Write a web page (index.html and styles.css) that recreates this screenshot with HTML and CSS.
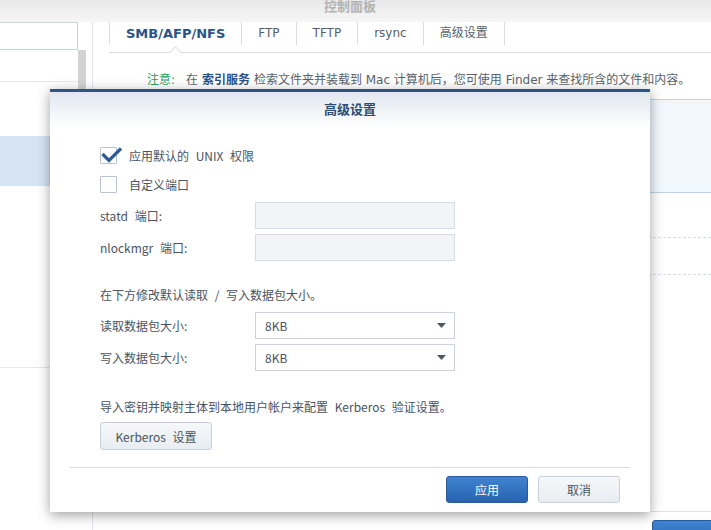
FILE: index.html
```html
<!DOCTYPE html>
<html lang="zh-CN">
<head>
<meta charset="utf-8">
<title>控制面板</title>
<link rel="stylesheet" href="styles.css">
</head>
<body>
<div class="app">
  <header class="titlebar"><span class="title">控制面板</span></header>
  <div class="main">
    <aside class="sidebar">
      <div class="side-col">
        <div class="search"></div>
        <ul class="side-list">
          <li class="side-item first"></li>
          <li class="side-item second"></li>
          <li class="side-item selected"></li>
          <li class="side-item rest"></li>
        </ul>
      </div>
      <div class="scrollbar"></div>
    </aside>
    <section class="content">
      <nav class="tabs">
        <span class="tab active">SMB/AFP/NFS</span>
        <span class="tab">FTP</span>
        <span class="tab">TFTP</span>
        <span class="tab">rsync</span>
        <span class="tab">高级设置</span>
        <span class="notch"></span>
      </nav>
      <p class="notice"><span class="note-key">注意:</span><span class="note-in">在</span><span class="note-link">索引服务</span> 检索文件夹并装载到 Mac 计算机后，您可使用 Finder 来查找所含的文件和内容。</p>
      <div class="info-panel"></div>
      <div class="dash-row first"></div>
      <div class="dash-row"></div>
      <div class="spacer"></div>
      <div class="bottom-bar"><span class="peek-btn"></span></div>
    </section>
  </div>

  <div class="dialog">
    <div class="dlg-head">高级设置</div>
    <div class="dlg-body">
      <div class="check-row">
        <span class="cb">
          <svg class="tick" width="23" height="18" viewBox="0 0 23 18"><polyline points="1.5,7 8,13.5 20,1.5" fill="none" stroke="#2d5c98" stroke-width="3.2"/></svg>
        </span>
        <span>应用默认的 UNIX 权限</span>
      </div>
      <div class="check-row second">
        <span class="cb"></span>
        <span>自定义端口</span>
      </div>
      <div class="field-row gap9">
        <span class="field-label">statd 端口:</span>
        <span class="input"></span>
      </div>
      <div class="field-row gap5">
        <span class="field-label">nlockmgr 端口:</span>
        <span class="input"></span>
      </div>
      <p class="desc first">在下方修改默认读取 / 写入数据包大小。</p>
      <div class="field-row gap9">
        <span class="field-label">读取数据包大小:</span>
        <span class="select"><span>8KB</span><svg width="9" height="5" viewBox="0 0 9 5"><polygon points="0,0 9,0 4.5,5" fill="#4e5660"/></svg></span>
      </div>
      <div class="field-row gap5">
        <span class="field-label">写入数据包大小:</span>
        <span class="select"><span>8KB</span><svg width="9" height="5" viewBox="0 0 9 5"><polygon points="0,0 9,0 4.5,5" fill="#4e5660"/></svg></span>
      </div>
      <p class="desc second">导入密钥并映射主体到本地用户帐户来配置 Kerberos 验证设置。</p>
      <button class="btn kerberos">Kerberos 设置</button>
    </div>
    <div class="dlg-foot">
      <button class="btn primary">应用</button>
      <button class="btn">取消</button>
    </div>
  </div>
</div>
</body>
</html>
```

FILE: styles.css
```css
* { box-sizing: border-box; }

body {
  margin: 0;
  width: 711px;
  height: 530px;
  overflow: hidden;
  background: #fff;
  font-family: "Noto Sans CJK SC", sans-serif;
  font-size: 12px;
  color: #4b5460;
}

.app {
  position: relative;
  width: 711px;
  height: 530px;
  overflow: hidden;
}

/* title bar */
.titlebar {
  height: 22px;
  background: linear-gradient(#e8e8e8, #f6f6f6);
  text-align: center;
  padding-right: 11px;
  overflow: hidden;
}
.title {
  display: block;
  margin-top: -1px;
  font-size: 13px;
  line-height: 14px;
  font-weight: bold;
  color: #b3b3b3;
}

.main {
  display: flex;
  height: 508px;
}

/* sidebar */
.sidebar {
  width: 93px;
  flex-shrink: 0;
  display: flex;
  border-right: 1px solid #e2e5e9;
}
.side-col { width: 78px; }
.search {
  height: 28px;
  border: 1px solid #c6d5e5;
  border-left: none;
  background: #fff;
}
.side-list {
  list-style: none;
  margin: 0;
  padding: 0;
}
.side-item.first { height: 32px; border-bottom: 1px solid #e6e8eb; }
.side-item.second { height: 54px; }
.side-item.selected { height: 50px; background: #d6e4f4; }
.side-item.rest { height: 182px; border-bottom: 1px solid #e6e8eb; }
.scrollbar {
  width: 8px;
  margin-top: 28px;
  height: 250px;
  background: #d3d3d3;
}

/* content */
.content {
  flex: 1;
  min-width: 0;
  display: flex;
  flex-direction: column;
}
.tabs {
  position: relative;
  margin-left: 16px;
  height: 31px;
  border-bottom: 1px solid #d9dde2;
  display: flex;
  align-items: flex-start;
}
.tab {
  height: 23px;
  line-height: 23px;
  padding: 0 16px;
  border-right: 1px solid #d5dde6;
  font-family: "DejaVu Sans", "Noto Sans CJK SC", sans-serif;
  font-size: 12px;
  color: #565f69;
  white-space: nowrap;
}
.tab.active {
  border-left: 1px solid #d5dde6;
  padding: 0 16px 0 16px;
  font-size: 13px;
  font-weight: bold;
  color: #2c5385;
}
.notch {
  position: absolute;
  left: 62px;
  bottom: -5px;
  width: 9px;
  height: 9px;
  background: #fff;
  border-left: 1px solid #d9dde2;
  border-top: 1px solid #d9dde2;
  transform: rotate(45deg);
}

.notice {
  margin: 19px 0 0 0;
  padding-left: 54px;
  line-height: 16px;
  font-family: "DejaVu Sans", "Noto Sans CJK SC", sans-serif;
  font-size: 12px;
  color: #59626c;
  white-space: nowrap;
}
.note-key { color: #1f9d63; margin-right: 11px; }
.note-in { margin-right: 4px; }
.note-link { color: #2a5384; font-weight: bold; }

.info-panel {
  margin: 11px 0 0 16px;
  height: 94px;
  background: #f0f7fd;
  border-top: 1px solid #bad5ec;
  border-bottom: 1px solid #bad5ec;
}
.dash-row {
  margin: 36px 0 0 16px;
  border-top: 1px dashed #d6dce3;
}
.dash-row.first { margin-top: 44px; }
.spacer { flex: 1; }
.bottom-bar {
  height: 19px;
  margin-left: 16px;
  border-top: 1px solid #e0e0e0;
  padding: 8px 0 0 543px;
}
.peek-btn {
  display: block;
  width: 82px;
  height: 27px;
  border-radius: 3px;
  border: 1px solid #2a5b9a;
  background: linear-gradient(#3f84d1, #2863b0);
}

/* dialog */
.dialog {
  position: absolute;
  left: 50px;
  top: 89px;
  width: 600px;
  height: 423px;
  display: flex;
  flex-direction: column;
  background: #fff;
  border-top: 3px solid #2e5487;
  box-shadow: 0 3px 12px rgba(0, 0, 0, 0.38);
}
.dlg-head {
  height: 34px;
  line-height: 34px;
  text-align: center;
  font-size: 13px;
  font-weight: bold;
  color: #2d4c76;
  background: linear-gradient(#e1e7f0, #fdfefe);
}
.dlg-body {
  flex: 1;
  padding: 21px 0 0 50px;
  display: flex;
  flex-direction: column;
  align-items: flex-start;
  word-spacing: 4px;
}
.check-row {
  height: 17px;
  display: flex;
  align-items: center;
  gap: 12px;
  line-height: 17px;
  color: #4b5460;
}
.check-row.second { margin-top: 12px; }
.cb {
  position: relative;
  width: 17px;
  height: 17px;
  border: 1px solid #b9c4cf;
  border-radius: 1px;
  background: #fff;
}
.tick {
  position: absolute;
  left: 0;
  top: -1px;
}
.field-row {
  height: 27px;
  display: flex;
  align-items: center;
}
.field-row.gap9 { margin-top: 9px; }
.field-row.gap5 { margin-top: 5px; }
.field-label {
  width: 155px;
  line-height: 17px;
}
.input {
  width: 200px;
  height: 27px;
  border: 1px solid #d5dbe2;
  background: #f3f4f6;
}
.select {
  width: 200px;
  height: 27px;
  border: 1px solid #cbd4de;
  background: #fff;
  display: flex;
  align-items: center;
  justify-content: space-between;
  padding: 0 8px 0 9px;
  color: #4b5460;
}
.desc {
  margin: 0;
  line-height: 17px;
}
.desc.first { margin-top: 25px; }
.desc.second { margin-top: 27px; }

.btn {
  height: 27px;
  width: 82px;
  font-family: "Noto Sans CJK SC", sans-serif;
  font-size: 12px;
  color: #4b5460;
  border: 1px solid #c8d1db;
  border-radius: 3px;
  background: linear-gradient(#f6f8fa, #e8edf2);
  padding: 0;
  line-height: 25px;
  word-spacing: 4px;
}
.btn.kerberos {
  margin-top: 7px;
  width: 112px;
  height: 28px;
}
.btn.primary {
  color: #fff;
  border-color: #2a5b9a;
  background: linear-gradient(#3f84d1, #2862af);
}

.dlg-foot {
  height: 45px;
  margin: 0 20px;
  border-top: 1px solid #dcdcdc;
  padding: 8px 10px 0 0;
  display: flex;
  justify-content: flex-end;
  align-items: flex-start;
  gap: 10px;
}
```
